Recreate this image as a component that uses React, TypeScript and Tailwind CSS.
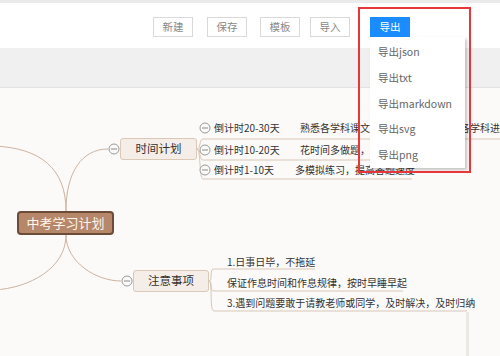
import React from "react";

const Minus = ({ x, y }: { x: number; y: number }) => (
  <svg
    className="absolute"
    style={{ left: x - 6, top: y - 6 }}
    width="12"
    height="12"
    viewBox="0 0 12 12"
  >
    <circle cx="6" cy="6" r="5" fill="#fbfaf9" stroke="#9a9a9a" strokeWidth="1" />
    <line x1="3" y1="6" x2="9" y2="6" stroke="#8a8a8a" strokeWidth="1" />
  </svg>
);

const T = ({ x, cy, children }: { x: number; cy: number; children: React.ReactNode }) => (
  <div
    className="absolute whitespace-nowrap text-[10px] leading-[14px] text-[#333]"
    style={{ left: x, top: cy - 7 }}
  >
    {children}
  </div>
);

export default function App() {
  const btn =
    "w-[40px] h-[20px] border border-[#d9d9d9] bg-white text-[10.5px] text-[#888] flex items-center justify-center";
  return (
    <div className="relative w-[500px] h-[356px] overflow-hidden bg-[#fbfaf9] font-['Noto_Sans_CJK_SC','Noto_Sans',sans-serif]">
      <div className="h-[3px] bg-[#ebebeb]" />
      <div className="h-[45px] bg-white flex items-start pt-[14px] pl-[153px]">
        <div className={btn}>新建</div>
        <div className={btn + " ml-[14px]"}>保存</div>
        <div className={btn + " ml-[13px]"}>模板</div>
        <div className={btn + " ml-[10px]"}>导入</div>
        <div className="ml-[20px] w-[40px] h-[20px] bg-[#1a8cff] text-white text-[10.5px] flex items-center justify-center">
          导出
        </div>
      </div>
      <div className="h-[40px] bg-[#f0f0f0] border-b border-[#e2e2e2]" />

      {/* mind map canvas */}
      <svg className="absolute left-0 top-0" width="500" height="356" viewBox="0 0 500 356" fill="none">
        <g stroke="#cdb3a0" strokeWidth="1">
          <path d="M66 211 C66 168 40 148 -6 146" />
          <path d="M66 211 C66 172 82 149 108 149" />
          <path d="M66 235 C66 268 30 288 -6 290" />
          <path d="M66 235 C66 262 96 281 121 281" />
        </g>
        <g stroke="#d8c6b7" strokeWidth="1">
          <path d="M197 149 C201 149 199 139 203 139 L500 139" />
          <path d="M197 149 C201 149 199 160 203 160 L440 160" />
          <path d="M197 149 C201 149 199 179 203 179 L412 179" />
          <path d="M209 281 C213 281 209 269 214 269 L315 269" />
          <path d="M209 281 C213 281 209 291 214 291 L403 291" />
          <path d="M209 281 C213 281 209 311 214 311 L467 311" />
        </g>
        <rect x="466" y="312" width="3" height="44" fill="#ece8e4" />
      </svg>

      <div className="absolute left-[17px] top-[211px] w-[97px] h-[24px] rounded-[4px] border-2 border-[#6c4c38] bg-[#b7876a] flex items-center justify-center text-[13px] text-[#fdf6ef]">
        中考学习计划
      </div>
      <div className="absolute left-[120px] top-[138px] w-[77px] h-[22px] rounded-[3px] border border-[#dcc8b7] bg-[#f5eee8] flex items-center justify-center text-[11.5px] text-[#333]">
        时间计划
      </div>
      <div className="absolute left-[133px] top-[270px] w-[76px] h-[22px] rounded-[3px] border border-[#dcc8b7] bg-[#f5eee8] flex items-center justify-center text-[11.5px] text-[#333]">
        注意事项
      </div>
      <Minus x={114} y={149} />
      <Minus x={127} y={281} />
      <Minus x={205} y={128} />
      <Minus x={205} y={150} />
      <Minus x={205} y={170} />

      <T x={214} cy={128}>倒计时20-30天</T>
      <T x={214} cy={150}>倒计时10-20天</T>
      <T x={214} cy={170}>倒计时1-10天</T>
      <T x={300} cy={128}>熟悉各学科课文内容，梳理知识把握各学科进度</T>
      <T x={300} cy={150}>花时间多做题，巩固知识点</T>
      <T x={295} cy={170}>多模拟练习，提高答题速度</T>

      <T x={227} cy={262}>1.日事日毕，不拖延</T>
      <T x={227} cy={283}>保证作息时间和作息规律，按时早睡早起</T>
      <T x={227} cy={303}>3.遇到问题要敢于请教老师或同学，及时解决，及时归纳</T>

      {/* dropdown */}
      <div className="absolute left-[370px] top-[37px] w-[95px] h-[131px] bg-white shadow-[2px_2px_3px_rgba(0,0,0,0.22)] pt-[2px] flex flex-col">
        {["导出json", "导出txt", "导出markdown", "导出svg", "导出png"].map((t) => (
          <div key={t} className="h-[26.5px] flex items-center pl-[8px] text-[10.5px] text-[#666]">
            {t}
          </div>
        ))}
      </div>

      {/* annotation box */}
      <div className="absolute left-[358px] top-[7px] w-[113px] h-[166px] border-2 border-[#e8373a]" />
    </div>
  );
}
